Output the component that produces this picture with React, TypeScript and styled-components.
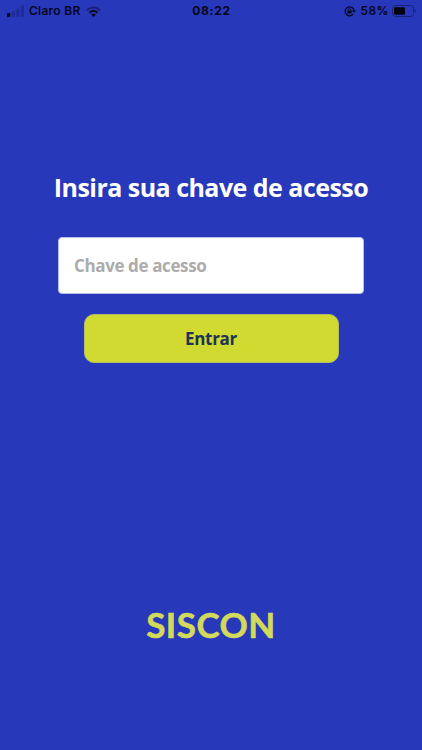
import React from "react";
import styled, { createGlobalStyle } from "styled-components";

const GlobalStyle = createGlobalStyle`
  *, *::before, *::after { box-sizing: border-box; }
  html, body { margin: 0; background: #2838ba; overflow: hidden; }
`;

const Screen = styled.div`
  width: 422px;
  height: 750px;
  display: flex;
  flex-direction: column;
  background: #2838ba;
  font-family: "Open Sans", "Noto Sans", sans-serif;
`;

const StatusBar = styled.header`
  height: 22px;
  display: grid;
  grid-template-columns: 1fr auto 1fr;
  align-items: center;
  padding: 0 6px 0 7px;
  color: #04061c;
  font: 500 12px/22px Inter, sans-serif;
  letter-spacing: 0.3px;
`;

const StatusGroup = styled.div<{ $end?: boolean }>`
  display: flex;
  align-items: center;
  gap: 5px;
  justify-content: ${(p) => (p.$end ? "flex-end" : "flex-start")};
  svg { display: block; flex: none; }
`;

const StatusText = styled.span`
  -webkit-text-stroke: 0.2px #04061c;
`;

const Percent = styled(StatusText)`
  margin-right: -2px;
  letter-spacing: 0.5px;
`;

const Clock = styled.time`
  font-weight: 700;
  letter-spacing: 0.7px;
`;

const Form = styled.form`
  display: flex;
  flex-direction: column;
  align-items: center;
  padding-top: 147px;
`;

const Title = styled.h1`
  margin: 0;
  color: #fff;
  font-size: 25px;
  line-height: 36px;
  font-weight: 700;
  letter-spacing: -0.53px;
  white-space: nowrap;
`;

const KeyInput = styled.input`
  width: 306px;
  height: 57px;
  margin-top: 32px;
  padding: 0 15px 1px;
  border: 1px solid #b9bee6;
  border-radius: 4px;
  background: #fff;
  font: 700 17px "Open Sans", sans-serif;
  letter-spacing: -0.38px;
  outline: none;
  &::placeholder { color: #acacac; opacity: 1; }
`;

const SubmitButton = styled.button`
  width: 255px;
  height: 49px;
  margin-top: 20px;
  padding: 0;
  border: 1px solid #b5bd62;
  border-radius: 10px;
  background: #d1da30;
  color: #1f3354;
  font: 700 17px "Open Sans", sans-serif;
  letter-spacing: -0.3px;
`;

const Brand = styled.footer`
  margin-top: 236px;
  text-align: center;
  color: #d3d95a;
  font: 700 35px/50px Lato, sans-serif;
  letter-spacing: 0.5px;
  -webkit-text-stroke: 0.6px #d3d95a;
`;

function SignalIcon() {
  return (
    <svg width="17" height="12" viewBox="0 0 17 12">
      <rect x="0" y="8" width="3.2" height="4" rx="0.8" fill="#04061c" />
      <g fill="#202d98">
        <rect x="4.7" y="6" width="3.2" height="6" rx="0.8" />
        <rect x="9.3" y="3.5" width="3.2" height="8.5" rx="0.8" />
        <rect x="13.8" y="0.5" width="3.2" height="11.5" rx="0.8" />
      </g>
    </svg>
  );
}

function WifiIcon() {
  return (
    <svg width="15" height="11" viewBox="0 0 15 11" fill="none" strokeWidth="2">
      <path d="M1 4.2C4.7.5 10.3.5 14 4.2" stroke="#182172" />
      <path d="M3.5 6.7C5.8 4.5 9.2 4.5 11.5 6.7" stroke="#04061c" />
      <path d="M5.2 8.5C6.5 7.3 8.5 7.3 9.8 8.5L7.5 10.9Z" fill="#04061c" />
    </svg>
  );
}

function RotationLockIcon() {
  return (
    <svg width="12" height="12" viewBox="0 0 12 12" fill="none" stroke="#04061c">
      <path d="M9 9.3A4.5 4.5 0 1 1 10 5.2" strokeWidth="1.3" />
      <path d="M8 5.2H12L10 8Z" fill="#04061c" stroke="none" />
      <rect x="3.4" y="5.4" width="4.2" height="3.2" rx="0.4" fill="#04061c" stroke="none" />
      <path d="M4.3 5.6V4.8A1.2 1.2 0 0 1 6.7 4.8V5.6" strokeWidth="0.8" />
    </svg>
  );
}

function BatteryIcon() {
  return (
    <svg width="24" height="12" viewBox="0 0 24 12">
      <rect x="0.5" y="0.5" width="21" height="11" rx="3" fill="none" stroke="#192373" />
      <rect x="2" y="2.3" width="11" height="7.4" rx="1.3" fill="#03040f" />
      <path d="M22.6 4C24.2 4.6 24.2 7.4 22.6 8Z" fill="#192373" />
    </svg>
  );
}

export default function App() {
  return (
    <Screen>
      <GlobalStyle />
      <StatusBar>
        <StatusGroup>
          <SignalIcon />
          <StatusText>Claro BR</StatusText>
          <WifiIcon />
        </StatusGroup>
        <Clock>08:22</Clock>
        <StatusGroup $end>
          <RotationLockIcon />
          <Percent>58%</Percent>
          <BatteryIcon />
        </StatusGroup>
      </StatusBar>
      <Form>
        <Title>Insira sua chave de acesso</Title>
        <KeyInput placeholder="Chave de acesso" aria-label="Chave de acesso" />
        <SubmitButton type="button">Entrar</SubmitButton>
      </Form>
      <Brand>SISCON</Brand>
    </Screen>
  );
}
